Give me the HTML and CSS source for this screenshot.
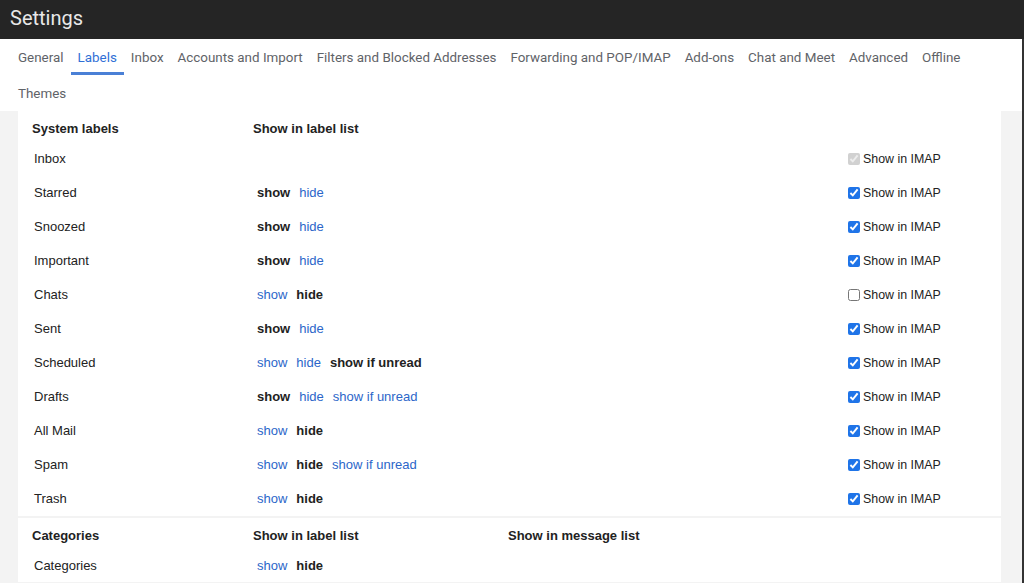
FILE: index.html
```html
<!DOCTYPE html>
<html lang="en">
<head>
<meta charset="utf-8">
<title>Settings</title>
<link rel="stylesheet" href="styles.css">
</head>
<body>
<header class="topbar">
  <h1 class="title">Settings</h1>
</header>
<nav class="tabs">
  <a class="tab">General</a>
  <a class="tab active">Labels</a>
  <a class="tab">Inbox</a>
  <a class="tab">Accounts and Import</a>
  <a class="tab">Filters and Blocked Addresses</a>
  <a class="tab">Forwarding and POP/IMAP</a>
  <a class="tab">Add-ons</a>
  <a class="tab">Chat and Meet</a>
  <a class="tab">Advanced</a>
  <a class="tab">Offline</a>
  <a class="tab">Themes</a>
</nav>
<main class="content">
  <section class="panel">
    <div class="row head">
      <div class="c1">System labels</div>
      <div class="c2">Show in label list</div>
      <div class="c3"></div>
      <div class="c4"></div>
    </div>
    <div class="row">
      <div class="c1">Inbox</div>
      <div class="c2 links"></div>
      <div class="c3"></div>
      <label class="c4 imap"><input type="checkbox" checked disabled>Show in IMAP</label>
    </div>
    <div class="row">
      <div class="c1">Starred</div>
      <div class="c2 links"><b>show</b><a>hide</a></div>
      <div class="c3"></div>
      <label class="c4 imap"><input type="checkbox" checked>Show in IMAP</label>
    </div>
    <div class="row">
      <div class="c1">Snoozed</div>
      <div class="c2 links"><b>show</b><a>hide</a></div>
      <div class="c3"></div>
      <label class="c4 imap"><input type="checkbox" checked>Show in IMAP</label>
    </div>
    <div class="row">
      <div class="c1">Important</div>
      <div class="c2 links"><b>show</b><a>hide</a></div>
      <div class="c3"></div>
      <label class="c4 imap"><input type="checkbox" checked>Show in IMAP</label>
    </div>
    <div class="row">
      <div class="c1">Chats</div>
      <div class="c2 links"><a>show</a><b>hide</b></div>
      <div class="c3"></div>
      <label class="c4 imap"><input type="checkbox">Show in IMAP</label>
    </div>
    <div class="row">
      <div class="c1">Sent</div>
      <div class="c2 links"><b>show</b><a>hide</a></div>
      <div class="c3"></div>
      <label class="c4 imap"><input type="checkbox" checked>Show in IMAP</label>
    </div>
    <div class="row">
      <div class="c1">Scheduled</div>
      <div class="c2 links"><a>show</a><a>hide</a><b>show if unread</b></div>
      <div class="c3"></div>
      <label class="c4 imap"><input type="checkbox" checked>Show in IMAP</label>
    </div>
    <div class="row">
      <div class="c1">Drafts</div>
      <div class="c2 links"><b>show</b><a>hide</a><a>show if unread</a></div>
      <div class="c3"></div>
      <label class="c4 imap"><input type="checkbox" checked>Show in IMAP</label>
    </div>
    <div class="row">
      <div class="c1">All Mail</div>
      <div class="c2 links"><a>show</a><b>hide</b></div>
      <div class="c3"></div>
      <label class="c4 imap"><input type="checkbox" checked>Show in IMAP</label>
    </div>
    <div class="row">
      <div class="c1">Spam</div>
      <div class="c2 links"><a>show</a><b>hide</b><a>show if unread</a></div>
      <div class="c3"></div>
      <label class="c4 imap"><input type="checkbox" checked>Show in IMAP</label>
    </div>
    <div class="row">
      <div class="c1">Trash</div>
      <div class="c2 links"><a>show</a><b>hide</b></div>
      <div class="c3"></div>
      <label class="c4 imap"><input type="checkbox" checked>Show in IMAP</label>
    </div>
  </section>
  <section class="panel">
    <div class="row head">
      <div class="c1">Categories</div>
      <div class="c2">Show in label list</div>
      <div class="c3">Show in message list</div>
      <div class="c4"></div>
    </div>
    <div class="row">
      <div class="c1">Categories</div>
      <div class="c2 links"><a>show</a><b>hide</b></div>
      <div class="c3"></div>
      <div class="c4"></div>
    </div>
  </section>
</main>
</body>
</html>
```

FILE: styles.css
```css
* { box-sizing: border-box; }

html, body {
  margin: 0;
  padding: 0;
  height: 100%;
  overflow: hidden;
}

body {
  font-family: "Liberation Sans", Arial, sans-serif;
  font-size: 13px;
  color: #222;
  background: #ffffff;
}

.topbar {
  height: 39px;
  background: #252525;
  display: flex;
  align-items: center;
  padding-left: 10px;
  padding-bottom: 3px;
}

.title {
  margin: 0;
  font-family: Roboto, "Liberation Sans", sans-serif;
  font-weight: 400;
  font-size: 20px;
  color: #e8e8e8;
}

.tabs {
  display: flex;
  flex-wrap: wrap;
  width: 1024px;
  height: 72px;
  padding: 0 40px 0 11px;
  font-family: Roboto, "Liberation Sans", sans-serif;
  font-size: 13.4px;
  color: #5f6368;
  border-right: 2px solid #333;
}

.tab {
  display: block;
  height: 36px;
  line-height: 37px;
  padding: 0 7px;
  border-bottom: 3px solid transparent;
}

.tab.active {
  color: #2f6fd6;
  border-bottom-color: #4a80d6;
}

.content {
  background: #f3f3f3;
  padding: 0 21px 0 18px;
  border-right: 2px solid #333;
  height: calc(100% - 111px);
  display: flex;
  flex-direction: column;
  gap: 2px;
}

.panel {
  background: #fff;
  padding-left: 14px;
}

.row {
  display: grid;
  grid-template-columns: 221px 255px 340px 1fr;
  height: 34.1px;
  align-items: center;
}

.row.head {
  height: 30px;
  padding-top: 5px;
  font-weight: bold;
}

.row:not(.head) .c1 {
  padding-left: 2px;
}

.links {
  display: flex;
  gap: 9px;
  padding-left: 4px;
}

.links a {
  color: #2c66c9;
}

.links b {
  color: #222;
}

.imap {
  display: flex;
  align-items: center;
  font-size: 12.4px;
  color: #222;
  padding-top: 1px;
}

.imap input {
  margin: 0 3px 0 0;
  width: 12px;
  height: 12px;
  accent-color: #1f74e8;
}
```
